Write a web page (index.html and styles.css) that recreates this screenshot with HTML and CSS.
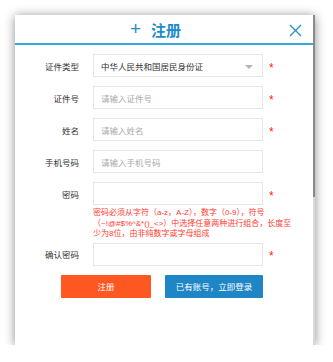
FILE: index.html
```html
<!DOCTYPE html>
<html>
<head>
    <title>注册</title>
    <link rel="stylesheet" href="styles.css">
</head>
<body>
    <div class="dialog">
        <div class="dialog-head">
            <div class="title"><span class="plus">+</span>注册</div>
            <svg class="close" width="13" height="13" viewBox="0 0 13 13">
                <path d="M1 1 L12 12 M12 1 L1 12" stroke="#2a93d0" stroke-width="1.4" fill="none"/>
            </svg>
        </div>
        <div class="scroll-thumb"></div>
        <div class="form">
            <div class="row">
                <label>证件类型</label>
                <div class="input select">中华人民共和国居民身份证<span class="caret"></span></div>
                <span class="star">*</span>
            </div>
            <div class="row">
                <label>证件号</label>
                <div class="input ph">请输入证件号</div>
                <span class="star">*</span>
            </div>
            <div class="row">
                <label>姓名</label>
                <div class="input ph">请输入姓名</div>
                <span class="star">*</span>
            </div>
            <div class="row">
                <label>手机号码</label>
                <div class="input ph">请输入手机号码</div>
                <span class="star"></span>
            </div>
            <div class="row">
                <label>密码</label>
                <div class="input"></div>
                <span class="star">*</span>
            </div>
            <div class="hint">
                密码必须从字符（a-z，A-Z），数字（0-9），符号<br>
                （~!@#$%^&amp;*()_&lt;&gt;）中选择任意两种进行组合，长度至<br>
                少为8位，由非纯数字或字母组成
            </div>
            <div class="row">
                <label>确认密码</label>
                <div class="input"></div>
                <span class="star">*</span>
            </div>
            <div class="buttons">
                <div class="btn btn-reg">注册</div>
                <div class="btn btn-login">已有账号，立即登录</div>
            </div>
        </div>
    </div>
</body>
</html>
```

FILE: styles.css
```css
html, body {
    margin: 0;
    padding: 0;
    background: #fff;
    font-family: "Liberation Sans", "Noto Sans CJK SC", sans-serif;
}
body {
    padding: 15px 0 0 15px;
}
.dialog {
    width: 300px;
    height: 330px;
    background: #fff;
    box-shadow: 0 1px 10px rgba(0, 0, 0, 0.45);
    position: relative;
    box-sizing: border-box;
    border-right: 2px solid #d8d8d8;
}
.dialog-head {
    height: 28px;
    border-bottom: 2px solid #3aa8dc;
    display: flex;
    align-items: center;
    justify-content: center;
    position: relative;
}
.title {
    color: #1e8bcb;
    font-size: 15px;
    font-weight: bold;
    display: flex;
    align-items: center;
    margin-left: -17px;
}
.plus {
    font-weight: normal;
    font-size: 19px;
    margin-right: 10px;
}
.close {
    position: absolute;
    right: 11px;
    top: 9px;
}
.scroll-thumb {
    position: absolute;
    right: -2px;
    top: 0;
    width: 2px;
    height: 182px;
    background: #8a8a8a;
}
.form {
    padding-top: 9px;
}
.row {
    display: flex;
    align-items: center;
    height: 23px;
    margin-bottom: 9px;
}
.row label {
    width: 64px;
    text-align: right;
    font-size: 8.5px;
    color: #333;
    margin-right: 14px;
}
.input {
    width: 170px;
    height: 23px;
    box-sizing: border-box;
    border: 1px solid #e6e6e6;
    font-size: 8.5px;
    color: #333;
    display: flex;
    align-items: center;
    padding-left: 7px;
    position: relative;
}
.input.ph {
    color: #aaa;
}
.caret {
    position: absolute;
    right: 9px;
    top: 10px;
    border-left: 4px solid transparent;
    border-right: 4px solid transparent;
    border-top: 4px solid #b5b5b5;
}
.star {
    color: #ff2020;
    font-size: 12px;
    margin-left: 6px;
    padding-top: 4px;
}
.hint {
    color: #ff3b30;
    font-size: 8px;
    line-height: 10.5px;
    margin: -6px 0 3px 78px;
    width: 185px;
    white-space: nowrap;
}
.buttons {
    display: flex;
    gap: 14px;
    margin: 1px 0 0 46px;
}
.btn {
    height: 23px;
    display: flex;
    align-items: center;
    justify-content: center;
    color: #fff;
    font-size: 8.5px;
    border-radius: 1px;
}
.btn-reg {
    width: 90px;
    background: #ff5722;
}
.btn-login {
    width: 98px;
    background: #1e86c5;
}
```
